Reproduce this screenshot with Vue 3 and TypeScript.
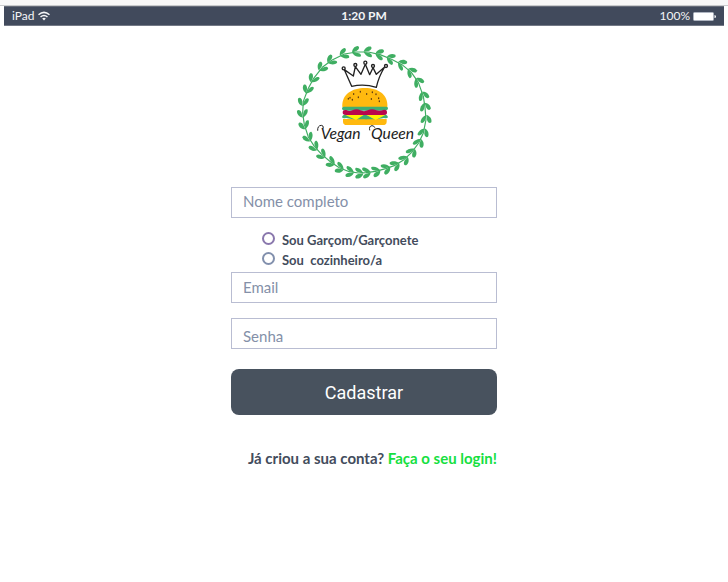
<script setup lang="ts">
import { ref } from 'vue'

type Role = 'waiter' | 'cook'

const fullName = ref('')
const email = ref('')
const password = ref('')
const role = ref<Role | null>(null)

const roles: { value: Role; label: string }[] = [
  { value: 'waiter', label: 'Sou Garçom/Garçonete' },
  { value: 'cook', label: 'Sou\u00a0 cozinheiro/a' },
]

// Leaf pairs sit along the wreath, each opening clockwise.
const center = { x: 224, y: 223 }
const leafPoints: [number, number][] = [
  [200, 42], [163, 48], [125, 67], [97, 88], [71, 121], [54, 153], [40, 190],
  [38, 225], [43, 260], [55, 297], [73, 325], [95, 349], [122, 372], [148, 389],
  [178, 401], [206, 405], [228, 404], [257, 400], [287, 392], [315, 382],
  [342, 365], [365, 343], [386, 315], [400, 285], [408, 245], [405, 208],
  [400, 175], [385, 133], [364, 103], [336, 80], [303, 63], [270, 50], [235, 42],
]
const leaves = leafPoints.map(([x, y]) => {
  const angle = (Math.atan2(y - center.y, x - center.x) * 180) / Math.PI + 90
  return `translate(${x} ${y}) rotate(${Math.round(angle)})`
})
const stem = `M${leafPoints.map((p) => p.join(' ')).join('L')}Z`

const seeds: [number, number][] = [
  [191, 168], [211, 161], [230, 168], [247, 163], [258, 169], [180, 179],
  [205, 178], [175, 182], [187, 185], [244, 183], [266, 181], [268, 190],
]
</script>

<template>
  <div class="screen">
    <div class="window-edge"></div>
    <header class="status">
      <div class="status-left">
        <span>iPad</span>
        <svg class="wifi" viewBox="0 0 12 10" aria-hidden="true">
          <path d="M.5 3.7Q6-1 11.5 3.7M2.5 6Q6 3 9.5 6" fill="none" stroke="currentColor" stroke-width="1.5" />
          <path d="M4.2 7.4Q6 6 7.8 7.4L6 9.4Z" fill="currentColor" />
        </svg>
      </div>
      <strong class="clock">1:20 PM</strong>
      <div class="status-right">
        <span>100%</span>
        <svg class="battery" viewBox="0 0 23 9" aria-hidden="true">
          <rect x=".5" y=".5" width="20" height="8" rx="1" fill="#fff" stroke="#aeb4c0" />
          <path d="M21.5 3v3q1.5 0 1.5-1.5T21.5 3Z" fill="#fff" />
        </svg>
      </div>
    </header>

    <main class="content">
      <svg class="logo" viewBox="-3 0 450 450" role="img" aria-label="Vegan Queen">
        <g fill="#3fae62">
          <path :d="stem" fill="none" stroke="#3fae62" stroke-width="3.5" stroke-linejoin="round" />
          <g v-for="leaf in leaves" :key="leaf" :transform="leaf">
            <path d="M-14 0C-13-9-5-18 6-17C12-13 8-6 0-3Z" />
            <path d="M-14 0C-10 9 0 17 10 15C14 10 9 4 0 2Z" />
          </g>
        </g>
        <g fill="none" stroke="#222" stroke-width="4" stroke-linejoin="round">
          <path d="M185 145L163 95L190 114L196 86L213 109L226 79L239 110L249 89L259 109L284 87Q266 116 259 148Q222 136 185 145Z" />
          <g fill="#fff">
            <circle cx="161" cy="91" r="4.5" />
            <circle cx="196" cy="81" r="4.5" />
            <circle cx="226" cy="74" r="4.5" />
            <circle cx="249" cy="84" r="4.5" />
            <circle cx="288" cy="84" r="4.5" />
          </g>
        </g>
        <path d="M157 208C154 169 186 150 225 150S295 169 292 208Z" fill="#ffb90f" />
        <ellipse v-for="(s, i) in seeds" :key="i" :cx="s[0]" :cy="s[1]" rx="2" ry="3" fill="#593712" />
        <path d="M159 243H290V251Q290 261 278 261H171Q159 261 159 251Z" fill="#ffb90f" />
        <path d="M161 206H289Q295 206 294 213Q290 220 280 218H170Q158 220 156 213Q155 207 161 206Z" fill="#3fae72" />
        <path d="M158 223Q158 215 169 216Q178 221 187 217Q200 211 211 217Q222 222 233 217Q246 211 259 217Q270 220 282 215Q291 214 291 223T283 231H166Q158 231 158 223Z" fill="#ba064c" />
        <path d="M156 237Q158 229 170 231H280Q292 229 294 237Q292 243 282 240L260 244H190L168 240Q158 243 156 237Z" fill="#3fae72" />
        <path d="M166 231H221L198 246ZM229 231H286L257 246Z" fill="#fff200" />
        <path d="M210 240Q225 226 243 240Q230 247 210 240Z" fill="#3fae72" />
        <g class="brand">
          <text x="92" y="304">Vegan</text>
          <text x="243" y="304">Queen</text>
        </g>
        <path d="M83 277Q82 263 94 262Q101 262 100 270M239 276Q236 264 246 263Q252 263 254 268" fill="none" stroke="#222" stroke-width="3" stroke-linecap="round" />
      </svg>

      <form class="form" @submit.prevent>
        <input v-model="fullName" class="field field-name" type="text" placeholder="Nome completo" aria-label="Nome completo" />
        <div class="roles" role="radiogroup" aria-label="Função">
          <label v-for="item in roles" :key="item.value" class="role" :class="item.value">
            <input v-model="role" type="radio" name="role" :value="item.value" />
            <span>{{ item.label }}</span>
          </label>
        </div>
        <input v-model="email" class="field" type="email" placeholder="Email" aria-label="Email" />
        <input v-model="password" class="field field-password" type="password" placeholder="Senha" aria-label="Senha" />
        <button class="submit" type="submit">Cadastrar</button>
        <p class="login">Já criou a sua conta? <a href="#login">Faça o seu login!</a></p>
      </form>
    </main>
  </div>
</template>

<style>
body {
  background: #fff;
}
</style>

<style scoped>
.screen {
  min-height: 100vh;
  font-family: Lato, "Liberation Sans", sans-serif;
  color: #434c5c;
}

.window-edge {
  height: 6px;
  box-sizing: border-box;
  background: #f8f8f8;
  border-bottom: 1px solid #c9cbcd;
}

.status {
  display: grid;
  grid-template-columns: 1fr auto 1fr;
  align-items: center;
  height: 20px;
  margin: 0 4px;
  padding: 0 8px;
  box-sizing: border-box;
  border-top: 1px solid #656b78;
  border-bottom: 1px solid #737986;
  background: #414a5c;
  color: #f4f5f7;
  font-size: 12px;
  line-height: 18px;
}

.status-left,
.status-right {
  display: flex;
  align-items: center;
  gap: 3px;
}

.status-right {
  justify-content: flex-end;
}

.wifi {
  width: 12px;
  height: 10px;
}

.battery {
  width: 23px;
  height: 9px;
}

.clock {
  font-weight: 700;
}

.content {
  display: flex;
  flex-direction: column;
  align-items: center;
  padding: 12px 16px;
}

.logo {
  width: 150px;
  height: 150px;
}

.brand {
  font-family: Lato, sans-serif;
  font-style: italic;
  font-size: 47px;
  font-weight: 400;
  fill: #222;
}

.form {
  display: flex;
  flex-direction: column;
  width: 100%;
  max-width: 266px;
  margin-top: -1px;
}

.field {
  width: 100%;
  height: 31px;
  box-sizing: border-box;
  padding: 0 11px 2px;
  border: 1px solid #b9bdd2;
  border-radius: 0;
  outline: none;
  background: #fff;
  color: #434c5c;
  font-family: inherit;
  font-size: 15px;
}

.field::placeholder {
  color: #8490a8;
  opacity: 1;
}

.field-name {
  padding-bottom: 4px;
}

.field-password {
  margin-top: 15px;
  padding-top: 6px;
}

.roles {
  padding: 12px 0 2px 31px;
}

.role {
  display: flex;
  align-items: center;
  gap: 7px;
  height: 20px;
  font-size: 13px;
  font-weight: 700;
  line-height: 20px;
}

.role input {
  appearance: none;
  width: 13px;
  height: 13px;
  margin: 0 0 4px;
  box-sizing: border-box;
  border: 2px solid #8290ad;
  border-radius: 50%;
}

.role.waiter input {
  border-color: #8a78ad;
}

.role input:checked {
  background: #434c5c;
}

.submit {
  height: 46px;
  margin-top: 20px;
  padding: 0;
  border: 0;
  border-radius: 8px;
  background: #48525e;
  color: #fff;
  font-family: Roboto, sans-serif;
  font-size: 18px;
}

.login {
  margin: 33px 0 0;
  font-size: 15px;
  font-weight: 700;
  line-height: 20px;
  text-align: right;
  white-space: nowrap;
}

.login a {
  color: #16e03f;
  text-decoration: none;
}
</style>
